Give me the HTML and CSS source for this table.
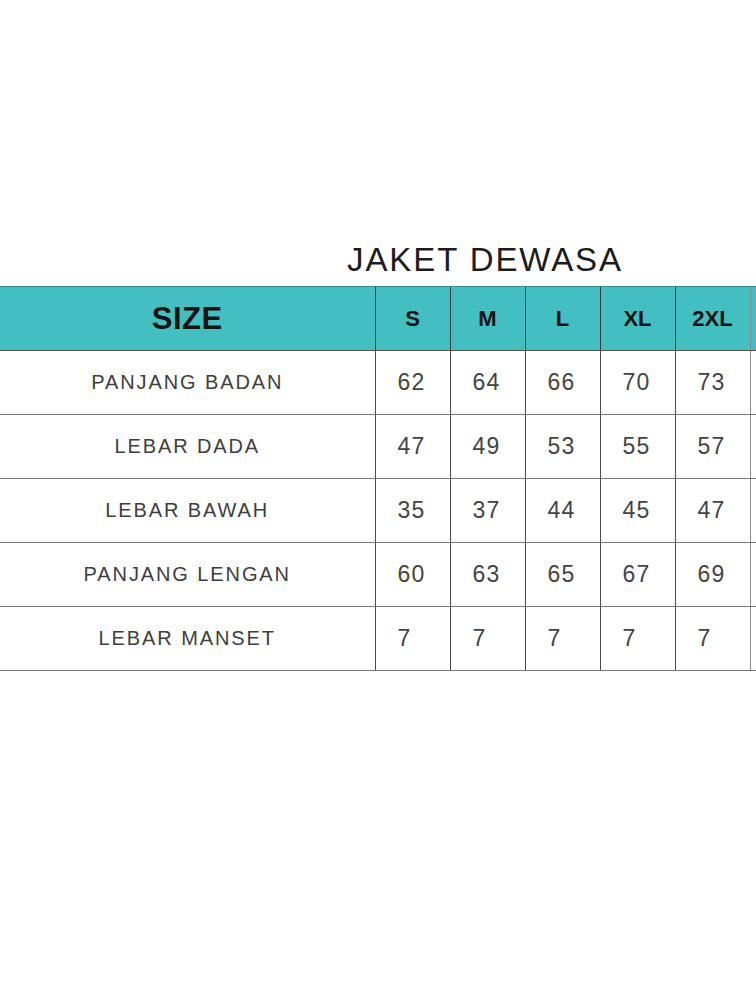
FILE: index.html
```html
<!DOCTYPE html>
<html>
<head>
<meta charset="utf-8">
<link rel="stylesheet" href="styles.css">
</head>
<body>
<div class="page">
  <div class="title">JAKET DEWASA</div>
  <div class="table-wrap">
    <table class="chart">
      <colgroup>
        <col class="c-label"><col class="c-size"><col class="c-size"><col class="c-size"><col class="c-size"><col class="c-size"><col class="c-edge">
      </colgroup>
      <thead>
        <tr>
          <th class="h-label">SIZE</th>
          <th>S</th><th>M</th><th>L</th><th>XL</th><th>2XL</th><th class="edge"></th>
        </tr>
      </thead>
      <tbody>
        <tr><td class="label">PANJANG BADAN</td><td>62</td><td>64</td><td>66</td><td>70</td><td>73</td><td class="edge"></td></tr>
        <tr><td class="label">LEBAR DADA</td><td>47</td><td>49</td><td>53</td><td>55</td><td>57</td><td class="edge"></td></tr>
        <tr><td class="label">LEBAR BAWAH</td><td>35</td><td>37</td><td>44</td><td>45</td><td>47</td><td class="edge"></td></tr>
        <tr><td class="label">PANJANG LENGAN</td><td>60</td><td>63</td><td>65</td><td>67</td><td>69</td><td class="edge"></td></tr>
        <tr><td class="label">LEBAR MANSET</td><td>7</td><td>7</td><td>7</td><td>7</td><td>7</td><td class="edge"></td></tr>
      </tbody>
    </table>
  </div>
</div>
</body>
</html>
```

FILE: styles.css
```css
html, body {
  margin: 0;
  padding: 0;
  background: #ffffff;
}
.page {
  width: 756px;
  height: 1008px;
  overflow: hidden;
  font-family: "Liberation Sans", Arial, sans-serif;
}
.title {
  padding-top: 240px;
  padding-left: 347px;
  height: 46px;
  font-size: 33px;
  line-height: 40px;
  letter-spacing: 1.9px;
  color: #1c1c1c;
  white-space: nowrap;
}
.table-wrap {
  width: 756px;
  overflow: hidden;
}
.chart {
  border-collapse: collapse;
  table-layout: fixed;
  width: 765px;
}
.c-label { width: 375px; }
.c-size { width: 75px; }
.c-edge { width: 15px; }
.chart th {
  background: #44bfc1;
  height: 63px;
  padding: 0;
  font-weight: bold;
  font-size: 22px;
  color: #141414;
  text-align: center;
  border-top: 1px solid #3a8c8e;
  border-left: 1px solid #3b3b3b;
  border-bottom: 1px solid #555;
}
.chart th.h-label {
  font-size: 31px;
  border-left: none;
  letter-spacing: 0.5px;
}
.chart td {
  height: 63px;
  padding: 0 0 0 22px;
  font-size: 23px;
  letter-spacing: 1.3px;
  color: #444;
  text-align: left;
  border-left: 1px solid #4a4a4a;
  border-bottom: 1px solid #7a7a7a;
}
.chart td.label {
  padding: 0;
  text-align: center;
  font-size: 20px;
  letter-spacing: 1.9px;
  color: #3e3e3e;
  border-left: none;
}
.chart .edge {
  padding: 0;
  border-left: 1px solid #8a8a8a;
}
```
